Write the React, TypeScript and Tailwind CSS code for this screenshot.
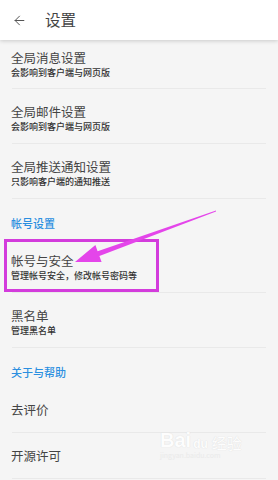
import React from 'react';
import { ArrowLeft } from 'lucide-react';

type Row =
  | { kind: 'item'; title: string; sub?: string; first?: boolean; boxed?: boolean }
  | { kind: 'section'; title: string };

const rows: Row[] = [
  { kind: 'item', title: '全局消息设置', sub: '会影响到客户端与网页版', first: true },
  { kind: 'item', title: '全局邮件设置', sub: '会影响到客户端与网页版' },
  { kind: 'item', title: '全局推送通知设置', sub: '只影响客户端的通知推送' },
  { kind: 'section', title: '帐号设置' },
  { kind: 'item', title: '帐号与安全', sub: '管理帐号安全，修改帐号密码等', boxed: true },
  { kind: 'item', title: '黑名单', sub: '管理黑名单' },
  { kind: 'section', title: '关于与帮助' },
  { kind: 'item', title: '去评价' },
  { kind: 'item', title: '开源许可' },
];

const font = { fontFamily: '"Noto Sans CJK SC", "Noto Sans", sans-serif' };

export default function App() {
  return (
    <div className="relative w-[278px] h-[480px] overflow-hidden bg-[#f5f5f5]" style={font}>
      {/* Toolbar */}
      <div className="relative z-10 h-[40px] bg-white flex items-center shadow-[0_1px_4px_rgba(0,0,0,0.18)]">
        <ArrowLeft size={15} strokeWidth={1.6} className="ml-[12px] text-[#555]" />
        <span className="ml-[18px] text-[15.5px] leading-none text-[#444]">设置</span>
      </div>

      {/* List */}
      <div className="flex flex-col">
        {rows.map((r, i) =>
          r.kind === 'section' ? (
            <div key={i} className="pl-[11px] pt-[17px] pb-[8px] text-[11px] leading-[14px] font-medium text-[#2b8fe0]">
              {r.title}
            </div>
          ) : (
            <div key={i} className="relative">
              <div className={`pl-[11px] ${r.first ? 'pt-[10px]' : 'pt-[15px]'} ${r.sub ? (r.first ? 'pb-[9px]' : 'pb-[10px]') : 'pb-[14px]'}`}>
                <div className="text-[12.5px] leading-[16px] text-[#444]">{r.title}</div>
                {r.sub && <div className="mt-[1px] text-[9px] leading-[12px] font-medium text-[#333]">{r.sub}</div>}
              </div>
              <div className="mx-3 h-px bg-[#e9e9e9]" />
              {r.boxed && (
                <div className="absolute left-[4px] top-[1px] w-[155px] h-[53px] border-[3px] border-[#d33cdc]" />
              )}
            </div>
          )
        )}
      </div>

      {/* Annotation arrow */}
      <svg className="absolute inset-0 pointer-events-none" width="278" height="480" viewBox="0 0 278 480">
        <polygon
          points="216,210.4 97.6,251.2 95.4,245 75,262 101.6,262 99.4,255.9 216,211.6"
          fill="#e445ea"
        />
      </svg>

      {/* Watermark */}
      <div className="absolute left-[160px] top-[430px] flex flex-col items-start pointer-events-none opacity-80">
        <div className="flex items-end gap-[2px]">
          <span className="text-[20px] leading-none font-bold text-white [text-shadow:0_0_1px_#cfcfcf]" style={{ fontFamily: '"Liberation Sans", sans-serif' }}>Bai</span>
          <span className="text-[12px] leading-none font-bold text-white [text-shadow:0_0_1px_#cfcfcf]" style={{ fontFamily: '"Liberation Sans", sans-serif' }}>du</span>
          <span className="ml-[2px] text-[15px] leading-none text-white [text-shadow:0_0_1px_#cfcfcf]">经验</span>
        </div>
        <span className="mt-[2px] text-[7px] leading-none text-[#e8e8e8]">jingyan.baidu.com</span>
      </div>
    </div>
  );
}
